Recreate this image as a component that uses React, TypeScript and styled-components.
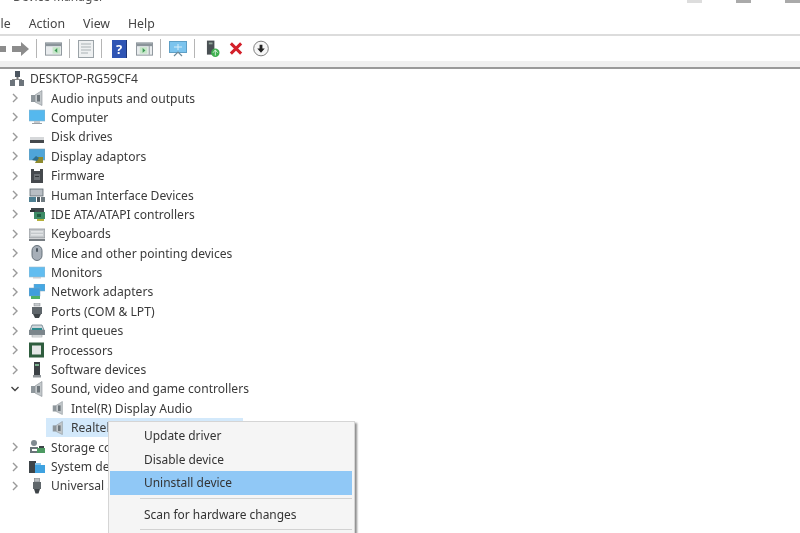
import React from 'react'
import styled, { createGlobalStyle } from 'styled-components'

const GlobalStyle = createGlobalStyle`
  html, body {
    margin: 0;
    padding: 0;
    background: #fff;
  }
`

const Glyph = ({ children, size = 16 }: { children: React.ReactNode; size?: number }) => (
  <svg width={size} height={size} viewBox='0 0 16 16'>
    {children}
  </svg>
)

const Speaker = () => (
  <>
    <rect x='2' y='5' width='4' height='7' fill='#8f979c' />
    <path d='M6 5 L13 0.5 L13 15.5 L6 12 Z' fill='#c3c8cb' stroke='#868e93' strokeWidth='0.6' />
    <rect x='8' y='5' width='3' height='6.5' fill='#6f777c' />
  </>
)

const icons: Record<string, React.ReactNode> = {
  pc: (
    <>
      <rect x='6' y='0' width='5' height='6' fill='#4c5660' />
      <rect x='7.5' y='6' width='2' height='3' fill='#777' />
      <rect x='1' y='9' width='5' height='6' fill='#6c747b' />
      <rect x='10' y='9' width='5' height='6' fill='#6c747b' />
      <rect x='3' y='8' width='10' height='1' fill='#888' />
    </>
  ),
  audio: <Speaker />,
  computer: (
    <>
      <rect x='0' y='1' width='16' height='11' fill='#55b8ee' stroke='#8fb4c8' strokeWidth='0.6' />
      <rect x='5' y='12' width='6' height='2' fill='#c4c8cc' />
      <rect x='3' y='14' width='10' height='1' fill='#9aa0a5' />
    </>
  ),
  disk: (
    <>
      <rect x='1' y='8' width='14' height='3' fill='#d6d8da' />
      <rect x='1' y='11' width='14' height='3' fill='#44484c' />
    </>
  ),
  display: (
    <>
      <rect x='0' y='1' width='16' height='11' fill='#4fa5d8' stroke='#7e9fb2' strokeWidth='0.6' />
      <path d='M6 15 L9 9 L14 9 L14 15 Z' fill='#8d8a2e' />
      <path d='M3 12 L7 8 L10 10 L8 13 Z' fill='#2e6f8e' />
    </>
  ),
  firmware: (
    <>
      <path d='M2 1 H5 V3 H11 V1 H14 V15 H2 Z' fill='#45494d' />
      <rect x='5' y='6' width='6' height='6' fill='#6b7074' />
      <rect x='6' y='8' width='4' height='1' fill='#33373a' />
    </>
  ),
  hid: (
    <>
      <rect x='1' y='2' width='13' height='7' fill='#b8bec4' stroke='#5f6a72' strokeWidth='0.8' />
      <rect x='0' y='10' width='7' height='5' fill='#4d7f92' />
      <rect x='8' y='10' width='3' height='5' fill='#49555c' />
      <rect x='12' y='10' width='4' height='5' fill='#6f7a80' />
    </>
  ),
  ide: (
    <>
      <rect x='2' y='2' width='13' height='4' fill='#40474b' />
      <rect x='5' y='6' width='11' height='7' fill='#3e8b66' />
      <rect x='1' y='4' width='5' height='2' fill='#2f3538' />
      <rect x='8' y='13' width='7' height='2' fill='#b5b03a' />
      <rect x='8' y='8' width='4' height='3' fill='#1f5d41' />
    </>
  ),
  keyboard: (
    <>
      <rect x='0' y='3' width='16' height='9' fill='#c5c9cc' stroke='#8a9095' strokeWidth='0.8' />
      <rect x='2' y='5' width='12' height='1.6' fill='#e2e4e6' />
      <rect x='2' y='8' width='12' height='1.6' fill='#e2e4e6' />
      <rect x='0' y='13' width='16' height='2' fill='#777d82' />
    </>
  ),
  mouse: (
    <>
      <rect x='3' y='0.5' width='10' height='15' rx='5' fill='#a7afb8' stroke='#5b6670' strokeWidth='0.9' />
      <rect x='7' y='3' width='2' height='4' rx='1' fill='#4c5760' />
    </>
  ),
  monitor: (
    <>
      <rect x='0' y='2' width='16' height='10' fill='#62bdf0' stroke='#9ebccc' strokeWidth='0.6' />
      <rect x='4' y='12' width='8' height='1.5' fill='#c9ccd0' />
    </>
  ),
  network: (
    <>
      <rect x='5' y='0' width='11' height='7' fill='#45a8e4' stroke='#7fa3ba' strokeWidth='0.5' />
      <rect x='0' y='4' width='11' height='8' fill='#3f9edd' stroke='#7fa3ba' strokeWidth='0.5' />
      <rect x='2' y='12' width='9' height='3' fill='#4db066' />
    </>
  ),
  ports: (
    <>
      <rect x='5' y='0' width='6' height='3' fill='#c7cbce' stroke='#80868b' strokeWidth='0.5' />
      <rect x='3' y='4' width='10' height='7' fill='#5f666b' />
      <path d='M4 11 H12 L10 15 H6 Z' fill='#3d4347' />
    </>
  ),
  print: (
    <>
      <path d='M3 2 H13 L15 7 H1 Z' fill='#cfd6da' stroke='#5d7480' strokeWidth='0.7' />
      <rect x='0' y='7' width='16' height='5' fill='#7b858b' />
      <rect x='3' y='5' width='10' height='2' fill='#2d8b8f' />
      <rect x='3' y='12' width='10' height='2' fill='#e9ebec' stroke='#8a9296' strokeWidth='0.5' />
    </>
  ),
  cpu: (
    <>
      <rect x='0' y='0.5' width='15' height='15' fill='#2f5d3e' />
      <rect x='3' y='3.5' width='9' height='9' fill='#e4e6e6' />
    </>
  ),
  software: (
    <>
      <rect x='5' y='0' width='6' height='13' fill='#3b4145' />
      <rect x='6' y='2' width='4' height='2' fill='#7bb08e' />
      <rect x='4' y='13' width='8' height='2.5' fill='#8d9397' />
    </>
  ),
  storage: (
    <>
      <circle cx='5' cy='4' r='3' fill='#7f8a90' />
      <path d='M1 8 H9 V10 H3 V12 H9 V14 H1 Z' fill='#6a7479' />
      <rect x='8' y='9' width='8' height='5' fill='#4d9a62' />
      <rect x='10' y='7' width='5' height='2' fill='#3c4347' />
    </>
  ),
  system: (
    <>
      <rect x='0' y='2' width='7' height='12' fill='#3d4448' />
      <rect x='6' y='6' width='10' height='8' fill='#3fa2e0' />
      <rect x='6' y='4' width='6' height='2' fill='#86c4ea' />
    </>
  ),
  usb: (
    <>
      <rect x='5.5' y='0' width='5' height='4' fill='#b9bdc0' stroke='#6f767b' strokeWidth='0.6' />
      <rect x='4' y='4' width='8' height='7' fill='#60676b' />
      <path d='M5 11 H11 L9.5 15.5 H6.5 Z' fill='#3e4448' />
    </>
  )
}

const tree = [
  { label: 'Audio inputs and outputs', icon: 'audio' },
  { label: 'Computer', icon: 'computer' },
  { label: 'Disk drives', icon: 'disk' },
  { label: 'Display adaptors', icon: 'display' },
  { label: 'Firmware', icon: 'firmware' },
  { label: 'Human Interface Devices', icon: 'hid' },
  { label: 'IDE ATA/ATAPI controllers', icon: 'ide' },
  { label: 'Keyboards', icon: 'keyboard' },
  { label: 'Mice and other pointing devices', icon: 'mouse' },
  { label: 'Monitors', icon: 'monitor' },
  { label: 'Network adapters', icon: 'network' },
  { label: 'Ports (COM & LPT)', icon: 'ports' },
  { label: 'Print queues', icon: 'print' },
  { label: 'Processors', icon: 'cpu' },
  { label: 'Software devices', icon: 'software' }
]

const tail = [
  { label: 'Storage controllers', icon: 'storage' },
  { label: 'System devices', icon: 'system' },
  { label: 'Universal Serial Bus controllers', icon: 'usb' }
]

const Chevron = ({ open }: { open?: boolean }) => (
  <svg width='8' height='10' viewBox='0 0 8 10'>
    <path
      d={open ? 'M0.5 3 L4 6.5 L7.5 3' : 'M2 1 L6 5 L2 9'}
      fill='none'
      stroke={open ? '#444' : '#9a9a9a'}
      strokeWidth='1.4'
    />
  </svg>
)

const App = () => (
  <Page>
    <GlobalStyle />
    <TitleBar>
      <TitleText>Device Manager</TitleText>
      <WindowControls>
        <ControlMark $faint />
        <ControlMark />
        <ControlMark />
      </WindowControls>
    </TitleBar>

    <MenuBar>
      <MenuItem>File</MenuItem>
      <MenuItem>Action</MenuItem>
      <MenuItem>View</MenuItem>
      <MenuItem>Help</MenuItem>
    </MenuBar>

    <Toolbar>
      <ToolSlot $w={8}>
        <svg width='8' height='16' viewBox='0 0 8 16'>
          <path d='M-8 8 L-1 2 V5 H6 V11 H-1 V14 Z' fill='#8c8c8c' />
        </svg>
      </ToolSlot>
      <ToolSlot $w={18} $left={3}>
        <svg width='18' height='16' viewBox='0 0 18 16'>
          <path d='M18 8 L10 1 V5 H1 V11 H10 V15 Z' fill='#8c8c8c' />
        </svg>
      </ToolSlot>
      <ToolDivider />
      <ToolSlot $w={17}>
        <svg width='17' height='14' viewBox='0 0 18 14'>
          <rect x='0.5' y='0.5' width='17' height='13' fill='#e9ecee' stroke='#8b949a' />
          <rect x='1' y='1' width='16' height='3' fill='#8b949a' />
          <rect x='8' y='5' width='8' height='7' fill='#c7e6c9' />
          <path d='M13 6 L10 8.5 L13 11 Z' fill='#3c9a55' />
        </svg>
      </ToolSlot>
      <ToolDivider />
      <ToolSlot $w={16}>
        <svg width='16' height='18' viewBox='0 0 16 18'>
          <rect x='0.5' y='0.5' width='15' height='17' fill='#eef0f1' stroke='#9aa2a7' />
          <path d='M3 4 H13 M3 7 H13 M3 10 H13 M3 13 H10' stroke='#aab1b6' strokeWidth='1.2' />
        </svg>
      </ToolSlot>
      <ToolDivider />
      <ToolSlot $w={15} $left={2}>
        <HelpIcon>?</HelpIcon>
      </ToolSlot>
      <ToolSlot $w={17} $left={9}>
        <svg width='17' height='14' viewBox='0 0 18 14'>
          <rect x='0.5' y='0.5' width='17' height='13' fill='#e9ecee' stroke='#8b949a' />
          <rect x='1' y='1' width='16' height='3' fill='#8b949a' />
          <rect x='4' y='5' width='8' height='7' fill='#c7e6c9' />
          <path d='M7 6 L10 8.5 L7 11 Z' fill='#3c9a55' />
          <path d='M14 4 V13' stroke='#8b949a' />
        </svg>
      </ToolSlot>
      <ToolDivider />
      <ToolSlot $w={18}>
        <svg width='18' height='16' viewBox='0 0 18 16'>
          <rect x='0.5' y='0.5' width='17' height='11' fill='#7cc4ee' stroke='#5e9fc6' />
          <path d='M5 15 L9 11 L13 15' fill='none' stroke='#6e8a9a' strokeWidth='1.2' />
          <path d='M9 3 V9 M5 6 H13' stroke='#d6eefa' strokeWidth='1' />
        </svg>
      </ToolSlot>
      <ToolDivider />
      <ToolSlot $w={14} $left={3}>
        <svg width='15' height='18' viewBox='0 0 15 18'>
          <rect x='1' y='0' width='8' height='15' fill='#4a5054' />
          <rect x='3' y='2' width='4' height='2' fill='#8fa398' />
          <circle cx='10' cy='13' r='4.5' fill='#3fb04f' />
          <path d='M10 10 V16 M7.5 13 L10 10 L12.5 13' stroke='#d9f3dc' fill='none' />
        </svg>
      </ToolSlot>
      <ToolSlot $w={14} $left={9}>
        <svg width='15' height='15' viewBox='0 0 15 15'>
          <path d='M2 2 L13 13 M13 2 L2 13' stroke='#d3202a' strokeWidth='3.2' />
        </svg>
      </ToolSlot>
      <ToolSlot $w={16} $left={10}>
        <svg width='17' height='17' viewBox='0 0 17 17'>
          <circle cx='8.5' cy='8.5' r='7.8' fill='#f6f6f6' stroke='#777' />
          <path d='M8.5 13 L4.5 8.5 H7 V4.5 H10 V8.5 H12.5 Z' fill='#222' />
        </svg>
      </ToolSlot>
    </Toolbar>
    <ToolbarFoot />

    <Tree>
      <RootRow>
        <Glyph>{icons.pc}</Glyph>
        <RowLabel>DESKTOP-RG59CF4</RowLabel>
      </RootRow>
      {tree.map(item => (
        <Row key={item.label}>
          <Chevron />
          <Glyph>{icons[item.icon]}</Glyph>
          <RowLabel>{item.label}</RowLabel>
        </Row>
      ))}
      <Row>
        <Chevron open />
        <Glyph>{icons.audio}</Glyph>
        <RowLabel>Sound, video and game controllers</RowLabel>
      </Row>
      <ChildRow>
        <Glyph size={14}>
          <Speaker />
        </Glyph>
        <RowLabel>Intel(R) Display Audio</RowLabel>
      </ChildRow>
      <ChildRow $selected>
        <Glyph size={14}>
          <Speaker />
        </Glyph>
        <RowLabel>Realtek High Definition Audio</RowLabel>
      </ChildRow>
      {tail.map(item => (
        <Row key={item.label}>
          <Chevron />
          <Glyph>{icons[item.icon]}</Glyph>
          <RowLabel>{item.label}</RowLabel>
        </Row>
      ))}

      <ContextMenu>
        <ContextItem>Update driver</ContextItem>
        <ContextItem>Disable device</ContextItem>
        <ContextItem $active>Uninstall device</ContextItem>
        <ContextRule />
        <ContextItem>Scan for hardware changes</ContextItem>
        <ContextRule />
      </ContextMenu>
    </Tree>
  </Page>
)

const uiFont = `'Noto Sans', 'Open Sans', sans-serif`

const Page = styled.div`
  position: relative;
  width: 800px;
  height: 533px;
  overflow: hidden;
  background: #fff;
  color: #2c2c2c;
  font-family: ${uiFont};
  font-size: 12.1px;
  filter: blur(0.55px);
`

const TitleBar = styled.div`
  height: 14px;
  display: flex;
  justify-content: space-between;
  overflow: hidden;
`

const TitleText = styled.div`
  margin: -11px 0 0 13px;
  font-size: 12px;
  line-height: 15px;
  color: #555;
`

const WindowControls = styled.div`
  display: flex;
  gap: 34px;
`

const ControlMark = styled.div<{ $faint?: boolean }>`
  width: 15px;
  height: 3px;
  background: ${p => (p.$faint ? '#ddd' : '#aaa')};
`

const MenuBar = styled.div`
  height: 20px;
  display: flex;
  align-items: center;
  gap: 18px;
  margin-left: -9px;
  padding-bottom: 2px;
  box-sizing: border-box;
  font-size: 12.3px;
  color: #444;
`

const MenuItem = styled.span``

const Toolbar = styled.div`
  height: 25px;
  display: flex;
  align-items: center;
  border-top: 2px solid #dcdcdc;
  background: #fff;
`

const ToolSlot = styled.div<{ $w: number; $left?: number }>`
  width: ${p => p.$w}px;
  margin-left: ${p => p.$left ?? 0}px;
  display: flex;
  justify-content: center;
  flex-shrink: 0;
`

const ToolDivider = styled.div`
  width: 1px;
  height: 19px;
  margin: 0 8px 0 7px;
  background: #b5b5b5;
`

const HelpIcon = styled.div`
  width: 15px;
  height: 18px;
  background: #2f55b4;
  border-right: 1px solid #1c3475;
  color: #fff;
  font-size: 13px;
  font-weight: 700;
  line-height: 18px;
  text-align: center;
`

const ToolbarFoot = styled.div`
  height: 6px;
  background: #f0f0f0;
  border-bottom: 2px solid #9a9a9a;
`

const Tree = styled.div`
  position: relative;
  display: flex;
  flex-direction: column;
`

const Row = styled.div`
  height: 19.4px;
  display: flex;
  align-items: center;
  padding-left: 11px;
  flex-shrink: 0;

  svg:first-child {
    margin-right: 10px;
  }

  svg:nth-child(2) {
    margin-right: 6px;
  }
`

const RootRow = styled(Row)`
  padding-left: 9px;

  svg:first-child {
    margin-right: 5px;
  }
`

const ChildRow = styled(Row)<{ $selected?: boolean }>`
  box-sizing: border-box;
  margin-left: 46px;
  width: 197px;
  padding-left: 5px;
  background: ${p => (p.$selected ? '#d3e9fb' : 'transparent')};

  svg:first-child {
    margin-right: 6px;
  }
`

const RowLabel = styled.span`
  white-space: nowrap;
  color: #3a3a3a;
`

const ContextMenu = styled.div`
  position: absolute;
  left: 108px;
  top: 352px;
  width: 242px;
  height: 130px;
  padding: 2px 2px 0 1px;
  background: #f5f5f5;
  border: 1px solid #d5d5d5;
  box-shadow: 2px 2px 2px rgba(0, 0, 0, 0.45);
  font-size: 11.95px;
`

const ContextItem = styled.div<{ $active?: boolean }>`
  height: 23.5px;
  line-height: 23.5px;
  padding-left: 34px;
  background: ${p => (p.$active ? '#90c8f6' : 'transparent')};
  color: #333;
`

const ContextRule = styled.div`
  height: 1px;
  margin: 3px 0 4px 30px;
  background: #d2d2d2;
`

export default App
